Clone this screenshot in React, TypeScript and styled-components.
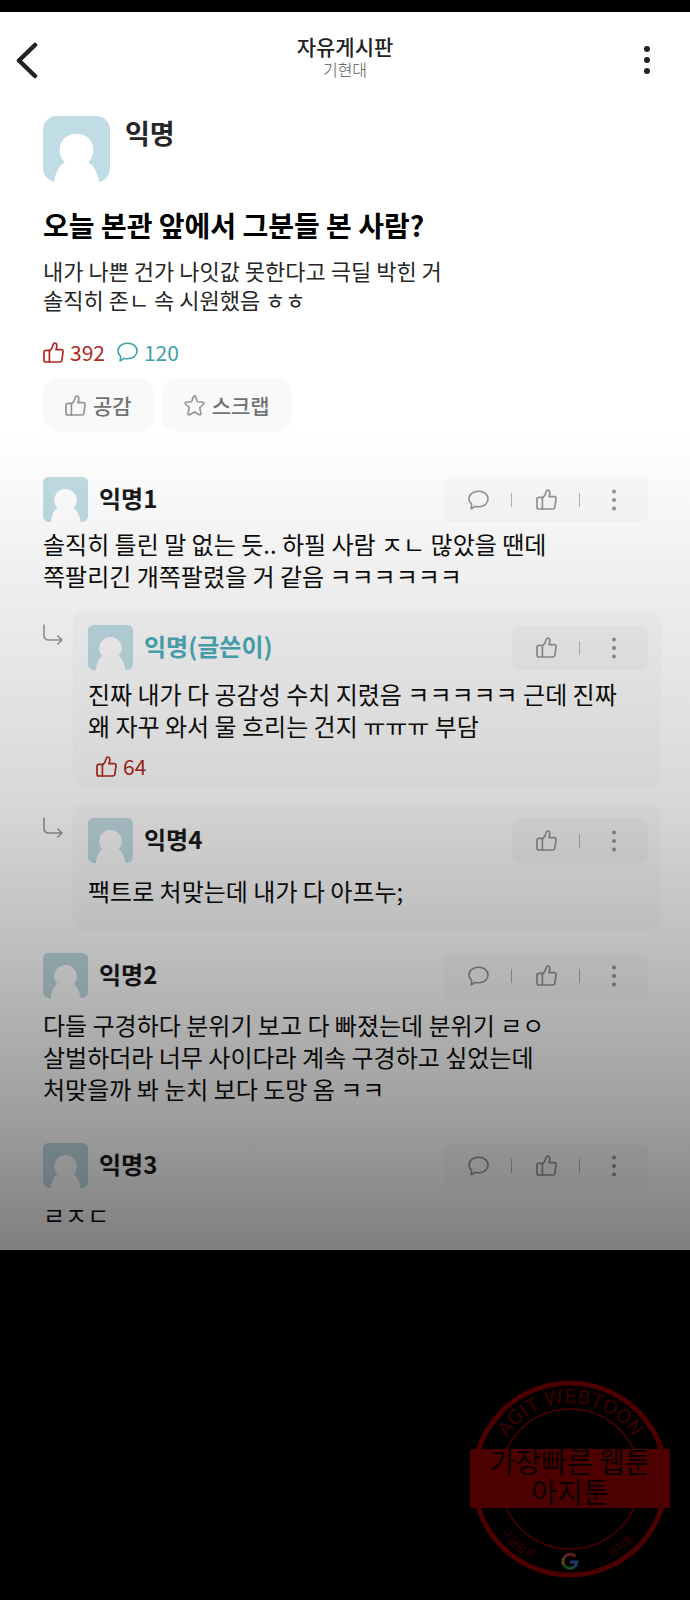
import React from 'react';
import styled, { createGlobalStyle } from 'styled-components';

const GlobalStyle = createGlobalStyle`
  * { box-sizing: border-box; }
  body {
    margin: 0;
    background: #000;
    color: #161616;
    font-family: "Noto Sans CJK KR", "Noto Sans", sans-serif;
  }
  button { font: inherit; color: inherit; border: 0; padding: 0; background: none; cursor: pointer; }
  h1, h2, h3, p, ul { margin: 0; padding: 0; }
  ul { list-style: none; }
  svg { display: block; flex: none; }
`;

const Page = styled.div`
  padding-top: 12px;
  background: #000;
`;

const Board = styled.main`
  position: relative;
  background: #fff;

  &::after {
    content: "";
    position: absolute;
    inset: 0;
    pointer-events: none;
    background: linear-gradient(
      rgba(0, 0, 0, 0) 34%,
      rgba(0, 0, 0, 0.07) 47%,
      rgba(0, 0, 0, 0.15) 63%,
      rgba(0, 0, 0, 0.26) 76%,
      rgba(0, 0, 0, 0.37) 88%,
      rgba(0, 0, 0, 0.5) 100%
    );
  }
`;

const TopBar = styled.header`
  display: grid;
  grid-template-columns: 60px 1fr 60px;
  align-items: center;
  height: 104px;
  padding: 0 13px 8px;
`;

const BarButton = styled.button<{ $end?: boolean }>`
  display: flex;
  justify-content: ${p => (p.$end ? 'flex-end' : 'flex-start')};
  align-items: center;
  height: 48px;
`;

const BarTitle = styled.div`
  padding-bottom: 8px;
  text-align: center;
  h1 { font-size: 21px; line-height: 26px; font-weight: 500; color: #222; }
  p { font-size: 16px; line-height: 20px; font-weight: 300; color: #555; }
`;

const Post = styled.article`
  padding: 0 29px 0 43px;
`;

const Author = styled.div`
  display: flex;
  gap: 15px;
  height: 68px;
  h2 { font-size: 27px; line-height: 34px; font-weight: 700; color: #262626; }
`;

const PostTitle = styled.h2`
  margin-top: 21px;
  font-size: 28px;
  line-height: 40px;
  font-weight: 700;
  color: #000;
`;

const PostBody = styled.p`
  margin-top: 11px;
  font-size: 22px;
  line-height: 29px;
  color: #262626;
`;

const Stats = styled.div`
  display: flex;
  gap: 12px;
  margin-top: 24px;
`;

const Stat = styled.span<{ $tone: string }>`
  display: flex;
  align-items: center;
  gap: 6px;
  font-size: 21px;
  line-height: 28px;
  color: ${p => p.$tone};
`;

const PostActions = styled.div`
  display: flex;
  gap: 8px;
  margin-top: 12px;
`;

const PostAction = styled.button`
  display: flex;
  align-items: center;
  gap: 7px;
  height: 54px;
  padding: 0 22px;
  border-radius: 16px;
  background: #f9f9f9;
  color: #949494;
  span { font-size: 21px; line-height: 28px; font-weight: 500; color: #727272; }
`;

const Comments = styled.ul`
  padding: 45px 29px 0 43px;
`;

const CommentItem = styled.li<{ $threaded: boolean }>`
  padding-bottom: ${p => (p.$threaded ? 22 : 38)}px;
  &:last-child { padding-bottom: 19px; }
`;

const Head = styled.div`
  display: flex;
  align-items: center;
  gap: 11px;
  height: 45px;
  padding-right: 13px;
`;

const Nick = styled.h3<{ $writer?: boolean }>`
  flex: 1;
  padding-bottom: 3px;
  font-size: 24px;
  line-height: 32px;
  font-weight: 700;
  color: ${p => (p.$writer ? '#4dabb9' : '#1a1a1a')};
`;

const Tools = styled.div<{ $deep?: boolean }>`
  display: flex;
  align-items: center;
  height: 44px;
  border-radius: 7px;
  background: ${p => (p.$deep ? '#f3f3f3' : '#fafafa')};
  color: #949494;
`;

const Tool = styled.button`
  display: flex;
  align-items: center;
  justify-content: center;
  width: 68px;
  height: 44px;
  & + & { position: relative; }
  & + &::before {
    content: "";
    position: absolute;
    left: -1px;
    top: 15px;
    width: 1px;
    height: 14px;
    background: #b5b5b5;
  }
`;

const CommentText = styled.p<{ $gap?: number }>`
  margin-top: ${p => p.$gap ?? 6}px;
  font-size: 24px;
  line-height: 32px;
  color: #0c0c0c;
`;

const Replies = styled.div`
  display: flex;
  flex-direction: column;
  gap: 15px;
  padding-top: 18px;
`;

const ReplyRow = styled.div`
  display: flex;
  gap: 10px;
  color: #999;
  & > svg { margin-top: 14px; }
`;

const ReplyCard = styled.div`
  flex: 1;
  padding: 15px 0 0 15px;
  border-radius: 14px;
  background: #fafafa;
`;

const ReplyFoot = styled.div`
  min-height: 24px;
`;

const Likes = styled.div`
  padding: 10px 0 8px 8px;
`;

const Footer = styled.footer`
  display: flex;
  justify-content: flex-end;
  padding: 129px 20px 20px;
  background: #000;
`;

const Avatar = ({ size = 45 }: { size?: number }) => (
  <svg width={size} height={size} viewBox="0 0 68 68" aria-hidden="true">
    <path
      fill="#c0dce4"
      d={
        size > 50
          ? 'M14 0H54A14 14 0 0 1 68 14V52C68 60 64 65 57 67C55 57 52 51 46 47C50 43 51 39 51 34C51 25 44 18 34 18S17 25 17 34C17 39 18 43 22 47C16 51 13 57 11 67C4 64 0 60 0 52V14A14 14 0 0 1 14 0Z'
          : 'M8 0H60A8 8 0 0 1 68 8V58C68 63 66 66 60 68H57C55 58 52 51 46 47C50 43 51 39 51 35C51 26 44 18 34 18S17 26 17 35C17 39 18 43 22 47C16 51 13 58 12 68H8C2 66 0 63 0 58V8A8 8 0 0 1 8 0Z'
      }
    />
  </svg>
);

const ThumbIcon = () => (
  <svg width="21" height="21" viewBox="0 0 21 21" fill="none" stroke="currentColor" strokeWidth="1.7" strokeLinejoin="round" strokeLinecap="round" aria-hidden="true">
    <path d="M6.400 8.400H2.900C1.600 8.400 1 9.100 1 10.300V18C1 19.400 1.600 20 2.900 20H6.400Z" />
    <path d="M6.400 9C8.800 7.200 9.700 5.200 10.200 2.700C10.500 1.400 11.100 .9 11.900 1C13.200 1.200 13.800 2.400 13.800 3.800C13.800 5.200 13.500 6.400 13 7.600H18.200C19.600 7.600 20.200 8.400 20 9.800L18.900 18C18.700 19.400 18 20 16.700 20H6.400" />
  </svg>
);

const BubbleIcon = () => (
  <svg width="21" height="20" viewBox="0 0 21 20" fill="none" stroke="currentColor" strokeWidth="1.6" strokeLinejoin="round" aria-hidden="true">
    <path d="M10.600 1.200C16 1.200 20 4.400 20 9S16 16.800 10.600 16.800C9.200 16.800 8 16.600 6.900 16.200C5.800 17.400 4.600 18.300 3.100 18.800C3.600 17.400 3.800 15.800 3.500 14.200C1.900 12.800 1 11 1 9C1 4.400 5.200 1.200 10.600 1.200Z" />
  </svg>
);

const StarIcon = () => (
  <svg width="21" height="21" viewBox="0 0 21 21" fill="none" stroke="currentColor" strokeWidth="1.6" strokeLinejoin="round" aria-hidden="true">
    <path d="M9.600 1.400Q10.500 .4 11.400 1.400L13.500 6.700L19.200 7.300Q20.400 7.800 19.700 8.800L15.700 12.700L17 18.600Q16.900 20.200 15.400 19.800L10.500 17L5.600 19.800Q4.100 20.200 4 18.600L5.300 12.700L1.300 8.800Q.6 7.800 1.800 7.300L7.500 6.700Z" />
  </svg>
);

const DotsIcon = () => (
  <svg width="6" height="22" viewBox="0 0 6 22" fill="currentColor" aria-hidden="true">
    <circle cx="3" cy="2.500" r="2" />
    <circle cx="3" cy="11" r="2" />
    <circle cx="3" cy="19.500" r="2" />
  </svg>
);

const ReplyIcon = () => (
  <svg width="20" height="22" viewBox="0 0 20 22" fill="none" stroke="currentColor" strokeWidth="1.6" strokeLinecap="round" strokeLinejoin="round" aria-hidden="true">
    <path d="M1 1V11C1 14.500 2.600 16 6 16H19M14.800 12L19 16L14.800 20" />
  </svg>
);

const CommentTools = ({ reply }: { reply?: boolean }) => (
  <Tools $deep={reply}>
    {!reply && <Tool type="button" aria-label="댓글"><BubbleIcon /></Tool>}
    <Tool type="button" aria-label="공감"><ThumbIcon /></Tool>
    <Tool type="button" aria-label="더보기"><DotsIcon /></Tool>
  </Tools>
);

type Entry = { name: string; lines: string[]; gap?: number; writer?: boolean; likes?: number; replies?: Entry[] };

const comments: Entry[] = [
  {
    name: '익명1',
    lines: ['솔직히 틀린 말 없는 듯.. 하필 사람 ㅈㄴ 많았을 땐데', '쪽팔리긴 개쪽팔렸을 거 같음 ㅋㅋㅋㅋㅋㅋ'],
    replies: [
      {
        name: '익명(글쓴이)',
        writer: true,
        likes: 64,
        gap: 8,
        lines: ['진짜 내가 다 공감성 수치 지렸음 ㅋㅋㅋㅋㅋ 근데 진짜', '왜 자꾸 와서 물 흐리는 건지 ㅠㅠㅠ 부담'],
      },
      { name: '익명4', gap: 12, lines: ['팩트로 처맞는데 내가 다 아프누;'] },
    ],
  },
  {
    name: '익명2',
    gap: 11,
    lines: ['다들 구경하다 분위기 보고 다 빠졌는데 분위기 ㄹㅇ', '살벌하더라 너무 사이다라 계속 구경하고 싶었는데', '처맞을까 봐 눈치 보다 도망 옴 ㅋㅋ'],
  },
  { name: '익명3', gap: 11, lines: ['ㄹㅈㄷ'] },
];

const Lines = ({ lines }: { lines: string[] }) => (
  <>
    {lines.map((line, i) => (
      <React.Fragment key={line}>
        {i > 0 && <br />}
        {line}
      </React.Fragment>
    ))}
  </>
);

const Reply = ({ entry }: { entry: Entry }) => (
  <ReplyRow>
    <ReplyIcon />
    <ReplyCard>
      <Head>
        <Avatar />
        <Nick $writer={entry.writer}>{entry.name}</Nick>
        <CommentTools reply />
      </Head>
      <CommentText $gap={entry.gap}><Lines lines={entry.lines} /></CommentText>
      <ReplyFoot>
        {entry.likes && <Likes><Stat $tone="#b3261e"><ThumbIcon />{entry.likes}</Stat></Likes>}
      </ReplyFoot>
    </ReplyCard>
  </ReplyRow>
);

const Stamp = () => (
  <svg width="200" height="200" viewBox="0 0 200 200" role="img" aria-label="AGIT WEBTOON">
    <defs>
      <path id="ring-top" d="M24 100A76 76 0 0 1 176 100" />
      <path id="ring-bottom" d="M12 100A88 88 0 0 0 188 100" />
    </defs>
    <g fill="none" stroke="#4c0000">
      <circle cx="100" cy="100" r="96" strokeWidth="5" />
      <circle cx="100" cy="100" r="70" strokeWidth="1.500" />
    </g>
    <text fill="#3c0000" fontFamily="DejaVu Sans, sans-serif" fontSize="19" textAnchor="middle">
      <textPath href="#ring-top" startOffset="50%">AGIT WEBTOON</textPath>
    </text>
    <g fill="#3c0000" fontFamily="Noto Sans CJK KR, sans-serif" fontSize="11">
      <text><textPath href="#ring-bottom" startOffset="58">구글검색</textPath></text>
      <text><textPath href="#ring-bottom" startOffset="180">아지툰</textPath></text>
    </g>
    <rect y="70" width="200" height="59" fill="#4c0000" />
    <g fill="#0a0000" fontFamily="Noto Sans CJK KR, sans-serif" fontSize="28" textAnchor="middle">
      <text x="100" y="94">가장빠른 웹툰</text>
      <text x="100" y="124">아지툰</text>
    </g>
    <g fill="none" strokeWidth="3">
      <path stroke="#5c211c" d="M105.500 177.500A7 7 0 0 0 94 179" />
      <path stroke="#5c480c" d="M94 179A7 7 0 0 0 94 186" />
      <path stroke="#154d25" d="M94 186A7 7 0 0 0 104 188" />
      <path stroke="#1f3863" d="M104 188A7 7 0 0 0 107 183H100" />
    </g>
  </svg>
);

export default function App() {
  return (
    <Page>
      <GlobalStyle />
      <Board>
        <TopBar>
          <BarButton type="button" aria-label="뒤로">
            <svg width="26" height="38" viewBox="0 0 26 38" fill="none" stroke="#222" strokeWidth="4.500" strokeLinecap="round" strokeLinejoin="round" aria-hidden="true">
              <path d="M22 4L6 19.500L22 35" />
            </svg>
          </BarButton>
          <BarTitle>
            <h1>자유게시판</h1>
            <p>기현대</p>
          </BarTitle>
          <BarButton type="button" aria-label="더보기" $end>
            <svg width="60" height="30" viewBox="0 0 60 30" fill="#222" aria-hidden="true">
              <circle cx="30" cy="4" r="3" />
              <circle cx="30" cy="15" r="3" />
              <circle cx="30" cy="26" r="3" />
            </svg>
          </BarButton>
        </TopBar>

        <Post>
          <Author>
            <Avatar size={67} />
            <h2>익명</h2>
          </Author>
          <PostTitle>오늘 본관 앞에서 그분들 본 사람?</PostTitle>
          <PostBody>
            <Lines lines={['내가 나쁜 건가 나잇값 못한다고 극딜 박힌 거', '솔직히 존ㄴ 속 시원했음 ㅎㅎ']} />
          </PostBody>
          <Stats>
            <Stat $tone="#b3261e"><ThumbIcon />392</Stat>
            <Stat $tone="#3fa0a6"><BubbleIcon />120</Stat>
          </Stats>
          <PostActions>
            <PostAction type="button"><ThumbIcon /><span>공감</span></PostAction>
            <PostAction type="button"><StarIcon /><span>스크랩</span></PostAction>
          </PostActions>
        </Post>

        <Comments>
          {comments.map(c => (
            <CommentItem key={c.name} $threaded={!!c.replies}>
              <Head>
                <Avatar />
                <Nick>{c.name}</Nick>
                <CommentTools />
              </Head>
              <CommentText $gap={c.gap}><Lines lines={c.lines} /></CommentText>
              {c.replies && (
                <Replies>
                  {c.replies.map(r => <Reply key={r.name} entry={r} />)}
                </Replies>
              )}
            </CommentItem>
          ))}
        </Comments>
      </Board>
      <Footer>
        <Stamp />
      </Footer>
    </Page>
  );
}
